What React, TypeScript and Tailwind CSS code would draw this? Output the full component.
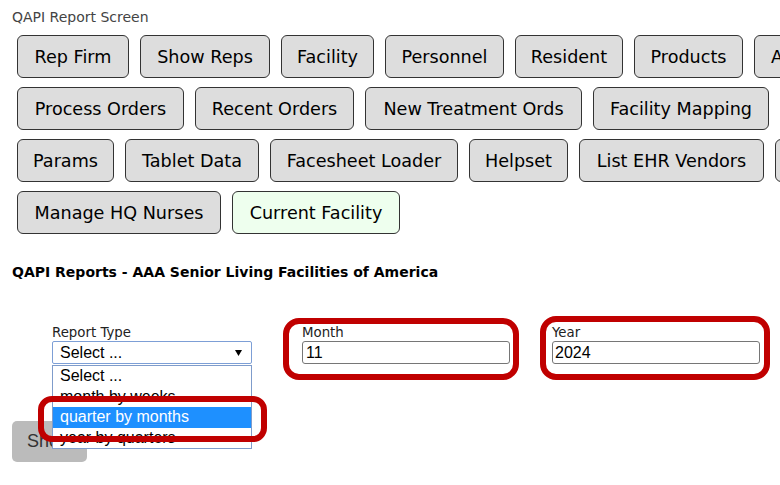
import React from "react";

type Btn = { label: string; cls: string; green?: boolean };

const buttons: Btn[] = [
  { label: "Rep Firm", cls: "w-[112px]" },
  { label: "Show Reps", cls: "w-[130px]" },
  { label: "Facility", cls: "w-[93px]" },
  { label: "Personnel", cls: "w-[119px]" },
  { label: "Resident", cls: "w-[108px]" },
  { label: "Products", cls: "w-[109px]" },
  { label: "Admin", cls: "w-[90px]" },
  { label: "Process Orders", cls: "w-[167px]" },
  { label: "Recent Orders", cls: "w-[159px]" },
  { label: "New Treatment Ords", cls: "w-[217px]" },
  { label: "Facility Mapping", cls: "w-[176px]" },
  { label: "Params", cls: "w-[97px]" },
  { label: "Tablet Data", cls: "w-[134px]" },
  { label: "Facesheet Loader", cls: "w-[188px]" },
  { label: "Helpset", cls: "w-[99px]" },
  { label: "List EHR Vendors", cls: "w-[185px]" },
  { label: "Reports", cls: "w-[80px]" },
  { label: "Manage HQ Nurses", cls: "w-[204px]" },
  { label: "Current Facility", cls: "w-[168px]", green: true },
];

const options = ["Select ...", "month by weeks", "quarter by months", "year by quarters"];

export default function App() {
  return (
    <div className="relative w-[780px] h-[485px] overflow-hidden bg-white font-['DejaVu_Sans',Verdana,sans-serif]">
      <div className="pl-[12px] pt-[9px] text-[14px] leading-[17px] text-[#444]">QAPI Report Screen</div>

      <div className="mt-[9px] ml-[17px] w-[843px] flex flex-wrap gap-x-[11px] gap-y-[9px]">
        {buttons.map((b) => (
          <div
            key={b.label}
            className={`${b.cls} h-[43px] shrink-0 flex items-center justify-center pt-[2px] whitespace-nowrap rounded-[6px] border border-[#333] text-[17.6px] text-black ${
              b.green ? "bg-[#eeffee]" : "bg-[#dddddd]"
            }`}
          >
            {b.label}
          </div>
        ))}
      </div>

      <div className="mt-[30px] pl-[12px] text-[14px] leading-[16px] font-bold text-black">
        QAPI Reports - AAA Senior Living Facilities of America
      </div>

      <div className="mt-[45px] ml-[52px] flex w-[760px]">
        <div className="w-[250px] shrink-0 flex flex-col">
          <div className="text-[13.33px] leading-[16px] text-[#222]">Report Type</div>
          <div className="relative w-[200px] h-[23px] border border-[#7d9fd6] rounded-[2px] flex items-center pl-[7px] font-['Liberation_Sans',Arial,sans-serif] text-[16px] text-black">
            Select ...
            <svg className="absolute right-[9px] top-[8px]" width="7" height="6" viewBox="0 0 7 6">
              <polygon points="0,0 7,0 3.5,6" fill="#000" />
            </svg>
          </div>
        </div>
        <div className="w-[250px] shrink-0 flex flex-col">
          <div className="text-[13.33px] leading-[16px] text-[#222]">Month</div>
          <input
            readOnly
            value="11"
            className="w-[208px] h-[23px] border border-[#767676] rounded-[3px] pl-[3px] font-['Liberation_Sans',Arial,sans-serif] text-[16px] text-black outline-none"
          />
        </div>
        <div className="w-[250px] shrink-0 flex flex-col">
          <div className="text-[13.33px] leading-[16px] text-[#222]">Year</div>
          <input
            readOnly
            value="2024"
            className="w-[208px] h-[23px] border border-[#767676] rounded-[3px] pl-[2px] font-['Liberation_Sans',Arial,sans-serif] text-[16px] text-black outline-none"
          />
        </div>
      </div>

      <div className="mt-[57px] ml-[12px] w-[75px] h-[41px] rounded-[5px] bg-[#bbbbbb] flex items-center pl-[15px] font-['Liberation_Sans',Arial,sans-serif] text-[18px] text-[#333]">
        Show
      </div>

      {/* dropdown popup */}
      <div className="absolute left-[52px] top-[365px] w-[200px] h-[84px] bg-white border border-[#7f9ccb] font-['Liberation_Sans',Arial,sans-serif] text-[16px]">
        {options.map((o, i) => (
          <div
            key={o}
            className={`h-[20.5px] leading-[20.5px] pl-[7px] whitespace-nowrap ${
              i === 2 ? "bg-[#1e90ff] text-white" : "text-black"
            }`}
          >
            {o}
          </div>
        ))}
      </div>

      {/* red annotation outlines */}
      <div className="absolute left-[283px] top-[318px] w-[236px] h-[62px] border-[6px] border-[#c00000] rounded-[16px]" />
      <div className="absolute left-[540px] top-[316px] w-[230px] h-[64px] border-[6px] border-[#c00000] rounded-[16px]" />
      <div className="absolute left-[38px] top-[396px] w-[229px] h-[46px] border-[6px] border-[#c00000] rounded-[14px]" />
    </div>
  );
}
